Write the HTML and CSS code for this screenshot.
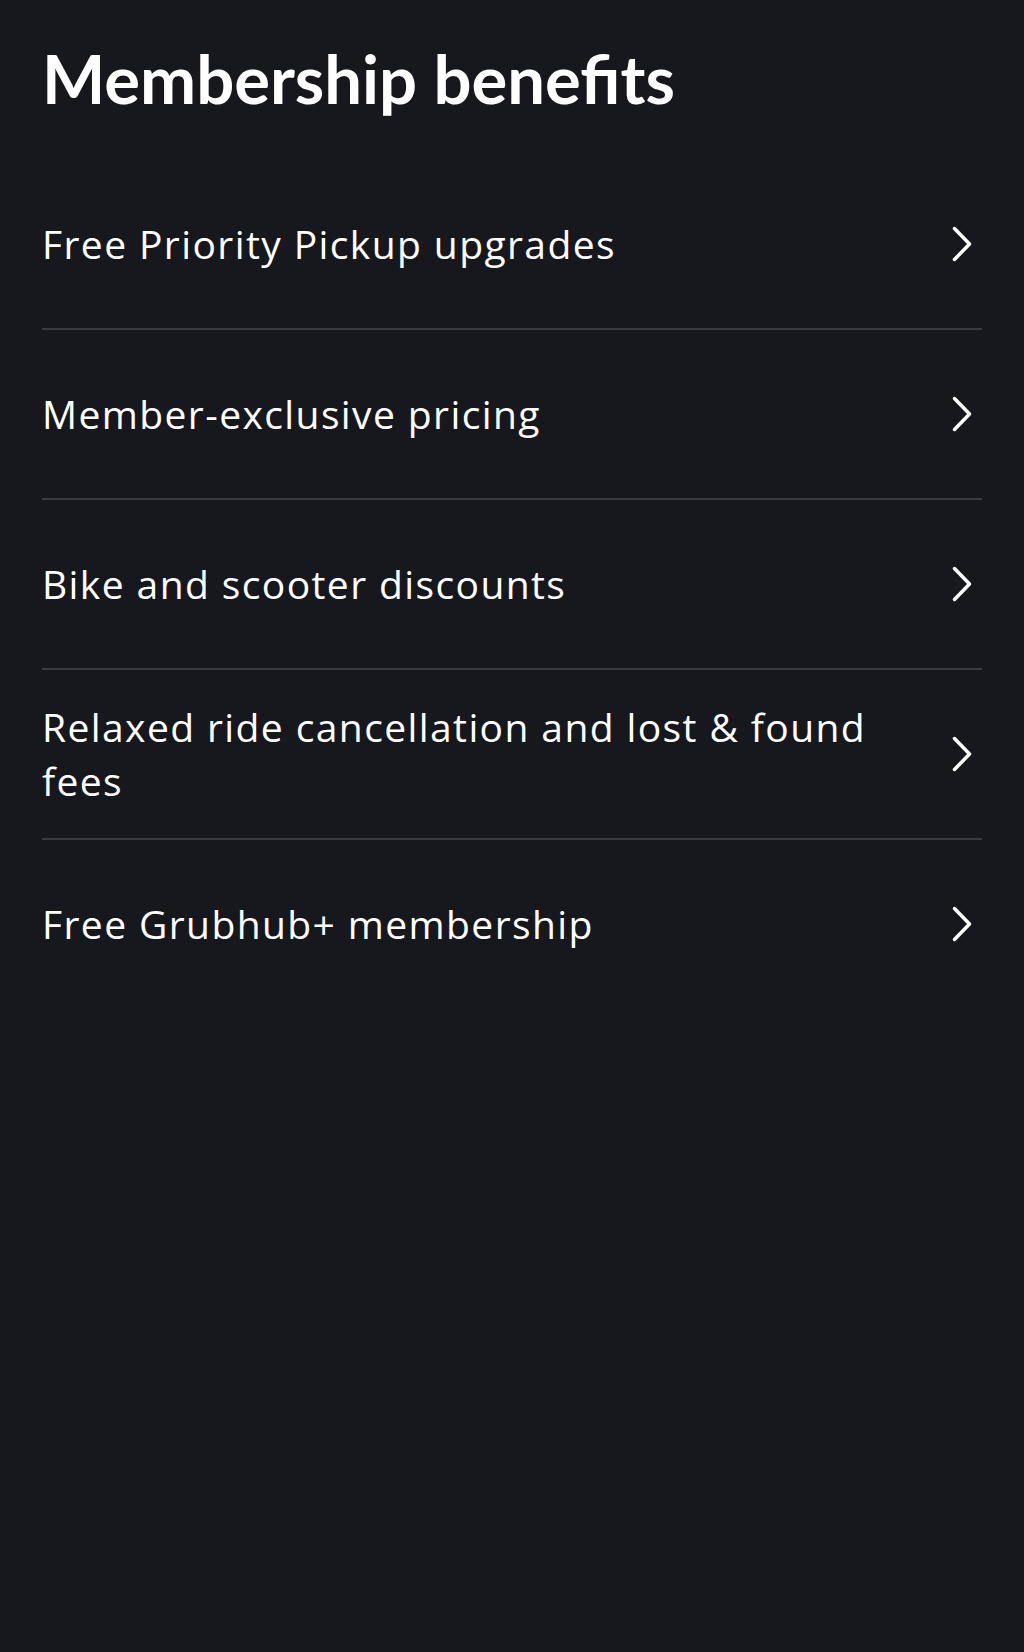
FILE: index.html
```html
<!DOCTYPE html>
<html lang="en">
<head>
<meta charset="utf-8">
<title>Membership benefits</title>
<link rel="stylesheet" href="styles.css">
</head>
<body>
<main class="page">
  <h1 class="title">Membership benefits</h1>
  <ul class="list">
    <li class="row"><span class="label">Free Priority Pickup upgrades</span><svg class="chev" viewBox="0 0 20 36" width="20" height="36"><polyline points="2.5,2.5 17.5,18 2.5,33.5"/></svg></li>
    <li class="row"><span class="label">Member-exclusive pricing</span><svg class="chev" viewBox="0 0 20 36" width="20" height="36"><polyline points="2.5,2.5 17.5,18 2.5,33.5"/></svg></li>
    <li class="row"><span class="label">Bike and scooter discounts</span><svg class="chev" viewBox="0 0 20 36" width="20" height="36"><polyline points="2.5,2.5 17.5,18 2.5,33.5"/></svg></li>
    <li class="row"><span class="label">Relaxed ride cancellation and lost &amp; found fees</span><svg class="chev" viewBox="0 0 20 36" width="20" height="36"><polyline points="2.5,2.5 17.5,18 2.5,33.5"/></svg></li>
    <li class="row"><span class="label">Free Grubhub+ membership</span><svg class="chev" viewBox="0 0 20 36" width="20" height="36"><polyline points="2.5,2.5 17.5,18 2.5,33.5"/></svg></li>
  </ul>
</main>
</body>
</html>
```
FILE: styles.css
```css
html, body {
  margin: 0;
  padding: 0;
  background: #17171e;
}
body {
  min-height: 1652px;
  color: #ffffff;
  font-family: "Open Sans", "Noto Sans", sans-serif;
}
.page {
  padding: 0 42px;
}
.title {
  margin: 0;
  padding-top: 38px;
  height: 160px;
  box-sizing: border-box;
  font-family: "Lato", "Noto Sans", sans-serif;
  font-size: 67px;
  line-height: 80px;
  font-weight: 700;
  letter-spacing: 0;
}
.list {
  list-style: none;
  margin: 0;
  padding: 0;
}
.row {
  display: flex;
  align-items: center;
  justify-content: space-between;
  gap: 60px;
  min-height: 168px;
  border-bottom: 2px solid #3a3b41;
}
.row:last-child {
  border-bottom: none;
}
.label {
  font-size: 39px;
  line-height: 54px;
  letter-spacing: 1.4px;
}
.chev {
  flex: none;
  margin-right: 10px;
  fill: none;
  stroke: #ffffff;
  stroke-width: 3.5;
  stroke-linecap: round;
  stroke-linejoin: round;
}
```
